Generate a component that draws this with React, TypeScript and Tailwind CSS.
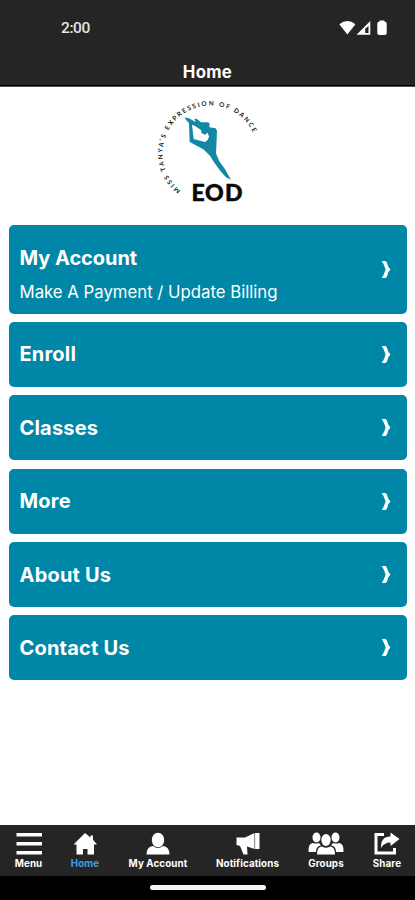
import React from "react";

const items: { title: string; sub?: string }[] = [
  { title: "My Account", sub: "Make A Payment / Update Billing" },
  { title: "Enroll" },
  { title: "Classes" },
  { title: "More" },
  { title: "About Us" },
  { title: "Contact Us" },
];

function Logo() {
  return (
    <svg width="110" height="112" viewBox="155 94 110 112" className="block">
      <path id="arc" d="M 180.6 190.3 A 47.5 47.5 0 1 1 257.5 157" fill="none" />
      <text className="font-['Lato'] font-bold" fontSize="6.4" fill="#222">
        <textPath href="#arc" textLength="170" lengthAdjust="spacing">MISS TANYA’S EXPRESSION OF DANCE</textPath>
      </text>
      <g transform="translate(145 90) scale(0.33333)">
        <path
          d="M118 83 L130 84 L152 96 L148 86 L156 87 L168 97 L190 97 L194 102 L193 112 L212 115 L216 122 L214 170 L213 190 L222 212 L240 238 L258 269 L243 262 L228 245 L208 218 L195 197 L175 178 L134 156 L132 100 Z M141 104 L146 147 L180 156 L188 150 L192 140 L188 128 L180 134 L170 130 L168 120 L150 108 Z"
          fill="#1288a5"
          fillRule="evenodd"
        />
      </g>
      <text x="191.4 204.9 225.1" y="200.5" className="font-['Lato'] font-black" fontSize="23" fill="#0a0a0a" stroke="#0a0a0a" strokeWidth="0.5">EOD</text>
    </svg>
  );
}

function Chevron() {
  return (
    <svg width="10" height="19" viewBox="0 0 10 19" className="block">
      <path d="M0.8 1 H4.8 Q6.6 3 7.2 6.5 L9.4 9.5 L7.2 12.5 Q6.6 16 4.8 18 H0.8 Q3.4 14 4.6 9.5 Q3.4 5 0.8 1 Z" fill="#fff" />
    </svg>
  );
}

function NavItem({ label, w, active, children }: { label: string; w: string; active?: boolean; children: React.ReactNode }) {
  return (
    <div className={`flex flex-col items-center ${w}`}>
      <svg width="36" height="24" viewBox="0 0 36 24" className="block" fill="#fff">
        {children}
      </svg>
      <span className={`mt-[2px] whitespace-nowrap text-[9.8px] leading-[11px] font-bold tracking-[0.1px] ${active ? "text-[#3b9fe6]" : "text-white"}`}>{label}</span>
    </div>
  );
}

export default function App() {
  return (
    <div className="flex h-[900px] w-[415px] flex-col overflow-hidden bg-white font-['Inter',sans-serif]">
      <header className="flex h-[87px] shrink-0 flex-col border-b border-[#555] bg-[#252525] text-white">
        <div className="flex h-[56px] items-center justify-between pr-[27px] pl-[61px]">
          <span className="pt-[2px] font-['Roboto'] text-[15.5px] font-medium tracking-[-0.4px] text-[#e4e4e4]">2:00</span>
          <svg width="50" height="16" viewBox="338 20 50 16" fill="#fff">
            <path d="M339.3 24.2 Q347.4 17.8 355.4 24.2 L347.4 34.5 Z" />
            <path fillRule="evenodd" d="M370.3 21 V34.8 H356.5 Z M368.5 26 V33 H365.2 V28.8 Z" />
            <path d="M379.7 20.5 H384.3 V21.5 Q386.7 21.5 386.7 23.5 V33 Q386.7 35 384.7 35 H379.3 Q377.3 35 377.3 33 V23.5 Q377.3 21.5 379.7 21.5 Z" />
          </svg>
        </div>
        <h1 className="mt-[5px] text-center text-[16.8px] leading-[22px] font-bold tracking-[0.3px]">Home</h1>
        <div className="mt-[2px] h-px bg-black" />
      </header>
      <main className="flex flex-1 flex-col">
        <div className="flex h-[138px] justify-center pt-[7px] pl-[5px]"><Logo /></div>
        <div className="flex flex-col gap-[8.4px] pr-[8px] pl-[9px]">
          {items.map((it) => (
            <div key={it.title} className={`flex items-center justify-between rounded-[5px] bg-[#0087a7] pr-[16px] pl-[10.5px] text-white ${it.sub ? "h-[88.5px]" : "h-[65px]"}`}>
              <div className={it.sub ? "pt-[10px]" : ""}>
                <div className={`text-[20px] leading-[26px] font-bold ${it.sub ? "tracking-[-0.05px]" : "tracking-[0.2px]"}`}>{it.title}</div>
                {it.sub && <div className="mt-[9px] text-[16.8px] leading-[24px] tracking-[-0.02px]">{it.sub}</div>}
              </div>
              <Chevron />
            </div>
          ))}
        </div>
      </main>
      <nav className="flex h-[51px] shrink-0 bg-[#252525] pt-[7px]">
        <NavItem label="Menu" w="w-[57px]">
          <path d="M5.5 1 H31 V4.5 H5.5 Z M5.5 10 H31 V13.5 H5.5 Z M5.5 19 H31 V22.5 H5.5 Z" />
        </NavItem>
        <NavItem label="Home" w="w-[56px]" active>
          <path d="M18 1 L23.5 5.5 V3.5 H26 V7.8 L30 12.5 H27 V22.5 H20.5 V17 H16 V22.5 H9.5 V12.5 H6.5 Z" />
        </NavItem>
        <NavItem label="My Account" w="w-[90px]">
          <ellipse cx="18" cy="8" rx="6.2" ry="7.3" />
          <path d="M6.5 22.5 Q6.5 14.5 13 14 Q18 18 23 14 Q29.5 14.5 29.5 22.5 Z" />
        </NavItem>
        <NavItem label="Notifications" w="w-[89px]">
          <path d="M6.5 5.5 L15 5.5 L24.5 1 V17 L17 14.5 L17.5 22.5 H13.5 L10 14 L6.5 13 Z M25.1 1 H29.5 V17 H25.1 Z" />
        </NavItem>
        <NavItem label="Groups" w="w-[68px]">
          <ellipse cx="8.5" cy="5.5" rx="4" ry="5" />
          <ellipse cx="27.5" cy="5.5" rx="4" ry="5" />
          <path d="M0.5 20 Q0 11.5 5 11 Q8 12 11 11 L13 13.5 Q8 14 8 20 Z M35.5 20 Q36 11.5 31 11 Q28 12 25 11 L23 13.5 Q28 14 28 20 Z" />
          <ellipse cx="18" cy="8" rx="4.7" ry="6" />
          <path d="M9 22.5 Q9 14.5 14 14.5 Q18 17 22 14.5 Q27 14.5 27 22.5 Z" />
        </NavItem>
        <NavItem label="Share" w="w-[54px]">
          <path d="M15 2.5 H7 V21 H25.5 V16" fill="none" stroke="#fff" strokeWidth="3" />
          <path d="M21.5 0.5 L30.5 7 L21.5 14 V10.5 Q15 10.5 12 16 Q11.5 4.5 21.5 4.5 Z" />
        </NavItem>
      </nav>
      <footer className="flex h-[24px] shrink-0 justify-center bg-black pt-[9px]">
        <div className="h-[5px] w-[116px] rounded-full bg-[#f4f4f4]" />
      </footer>
    </div>
  );
}
